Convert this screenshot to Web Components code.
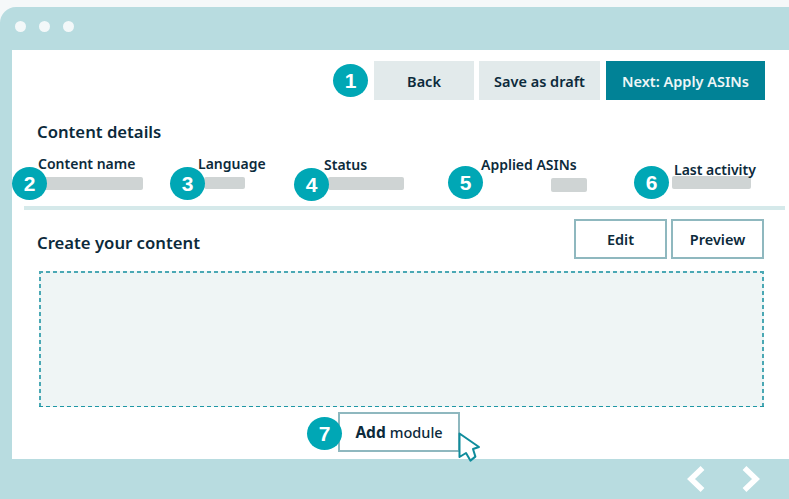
<!doctype html>
<html>
<head>
<meta charset="utf-8">
<title>Content details</title>
<style>
  html, body { margin: 0; height: 100%; }
  body {
    background: #f5f8f9;
    padding-top: 7px;
    box-sizing: border-box;
    overflow: hidden;
    font-family: "Noto Sans", sans-serif;
    font-weight: 600;
    color: #0c2a3b;
  }
</style>
</head>
<body>
<app-window>
  <tool-bar slot="top">
    <step-badge n="1" style="margin-right:6px"></step-badge>
    <ui-button kind="soft" style="width:100px">Back</ui-button>
    <ui-button kind="soft" style="width:121px;margin-left:5px">Save as draft</ui-button>
    <ui-button kind="primary" style="width:159px;margin-left:6px">Next: Apply ASINs</ui-button>
  </tool-bar>

  <section-title style="margin:21px 0 0 25px">Content details</section-title>

  <field-row>
    <info-field n="2" label="Content name" style="width:160px;--lx:0px;--ly:0px;--bx:6px;--by:5px;--bw:99px;--bh:13px;--nx:-26px;--ny:3px"></info-field>
    <info-field n="3" label="Language" style="width:126px;--lx:0px;--ly:0px;--bx:6px;--by:5px;--bw:41px;--bh:12px;--nx:-28px;--ny:3px"></info-field>
    <info-field n="4" label="Status" style="width:157px;--lx:0px;--ly:1px;--bx:4px;--by:5px;--bw:76px;--bh:13px;--nx:-30px;--ny:4px"></info-field>
    <info-field n="5" label="Applied ASINs" style="width:191px;--lx:0px;--ly:1px;--bx:70px;--by:6px;--bw:36px;--bh:14px;--nx:-33px;--ny:2px"></info-field>
    <info-field n="6" label="Last activity" style="width:110px;--lx:2px;--ly:6px;--bx:0px;--by:4px;--bw:79px;--bh:13px;--nx:-38px;--ny:2px"></info-field>
  </field-row>

  <hr-line></hr-line>

  <section-head>
    <section-title class="create">Create your content</section-title>
    <ui-button kind="outline" slot="actions" style="width:93px;height:40px">Edit</ui-button>
    <ui-button kind="outline" slot="actions" style="width:93px;height:40px;margin-left:4px">Preview</ui-button>
  </section-head>

  <drop-zone></drop-zone>

  <add-row>
    <ui-button kind="outline" style="width:122px;height:40px"><b>Add</b><small>module</small></ui-button>
  </add-row>
</app-window>

<script>
// one numbered teal circle, the callouts on the screenshot
class StepBadge extends HTMLElement {
  constructor() {
    super();
    this.attachShadow({ mode: "open" }).innerHTML = `
      <style>
        :host {
          display: flex; flex: none; align-items: center; justify-content: center;
          width: 35px; height: 33px; border-radius: 50%;
          background: #00a7b5; color: #fff;
          font: 700 21px "Liberation Sans", sans-serif;
        }
      </style>
      <span>${this.getAttribute("n")}</span>`;
  }
}
customElements.define("step-badge", StepBadge);

class UiButton extends HTMLElement {
  constructor() {
    super();
    this.attachShadow({ mode: "open" }).innerHTML = `
      <style>
        :host {
          display: flex; flex: none; align-items: center; justify-content: center;
          box-sizing: border-box; height: 39px;
          font-size: 14.500px; white-space: pre;
        }
        :host([kind=soft]) { background: #e2eaeb; }
        :host([kind=primary]) { background: #018296; color: #eef6f7; }
        :host([kind=outline]) { background: #fff; border: 2px solid #8fb8bf; }
        ::slotted(b) { font-size: 15.500px; font-weight: 700; margin-right: 4px; }
        ::slotted(small) { font-size: 14.500px; font-weight: 500; }
      </style>
      <slot></slot>`;
  }
}
customElements.define("ui-button", UiButton);

class ToolBar extends HTMLElement {
  constructor() {
    super();
    this.attachShadow({ mode: "open" }).innerHTML = `
      <style>
        :host { display: flex; align-items: center; justify-content: flex-end; padding: 11px 24px 0 0; }
      </style>
      <slot></slot>`;
  }
}
customElements.define("tool-bar", ToolBar);

class SectionTitle extends HTMLElement {
  constructor() {
    super();
    this.attachShadow({ mode: "open" }).innerHTML = `
      <style>
        :host { display: block; font-size: 16.700px; line-height: 22px; }
        :host(.create) { padding-top: 8px; }
      </style>
      <slot></slot>`;
  }
}
customElements.define("section-title", SectionTitle);

class FieldRow extends HTMLElement {
  constructor() {
    super();
    this.attachShadow({ mode: "open" }).innerHTML = `
      <style>
        :host { display: flex; padding: 12px 0 0 26px; height: 39px; }
      </style>
      <slot></slot>`;
  }
}
customElements.define("field-row", FieldRow);

// label over a grey placeholder bar, the badge sits on top of both
class InfoField extends HTMLElement {
  constructor() {
    super();
    this.attachShadow({ mode: "open" }).innerHTML = `
      <style>
        :host { display: block; position: relative; flex: none; }
        .label {
          position: relative; z-index: 1;
          font-size: 14px; line-height: 17px; white-space: nowrap;
          transform: translate(var(--lx), var(--ly));
        }
        .bar {
          margin: var(--by) 0 0 var(--bx);
          width: var(--bw); height: var(--bh);
          background: #cfd4d4; border-radius: 2px;
        }
        step-badge { position: absolute; z-index: 2; left: var(--nx); top: calc(17px + var(--ny) - 8px); }
      </style>
      <div class="label">${this.getAttribute("label")}</div>
      <div class="bar"></div>
      <step-badge n="${this.getAttribute("n")}"></step-badge>`;
  }
}
customElements.define("info-field", InfoField);

class HrLine extends HTMLElement {
  constructor() {
    super();
    this.attachShadow({ mode: "open" }).innerHTML = `
      <style>
        :host { display: block; height: 4px; margin: 12px 4px 0 12px; background: #d5e9ea; }
      </style>`;
  }
}
customElements.define("hr-line", HrLine);

class SectionHead extends HTMLElement {
  constructor() {
    super();
    this.attachShadow({ mode: "open" }).innerHTML = `
      <style>
        :host { display: flex; align-items: center; justify-content: space-between; padding: 9px 25px 0 25px; }
        .actions { display: flex; }
      </style>
      <slot></slot>
      <div class="actions"><slot name="actions"></slot></div>`;
  }
}
customElements.define("section-head", SectionHead);

// the dashes are drawn as gradients, a css dashed border comes out too short
class DropZone extends HTMLElement {
  constructor() {
    super();
    this.attachShadow({ mode: "open" }).innerHTML = `
      <style>
        :host {
          --dash: #4aa8b4;
          display: block; box-sizing: border-box; height: 136px;
          margin: 12px 25px 0 27px;
          background-color: #eff5f5;
          background-image:
            repeating-linear-gradient(90deg, var(--dash) 0 4px, transparent 4px 7px),
            repeating-linear-gradient(90deg, #1f97a5 0 4px, transparent 4px 7px),
            repeating-linear-gradient(0deg, var(--dash) 0 4px, transparent 4px 7px),
            repeating-linear-gradient(0deg, var(--dash) 0 4px, transparent 4px 7px);
          background-size: 100% 2px, 100% 1px, 2px 100%, 2px 100%;
          background-position: 0 0, 0 100%, 0 0, 100% 0;
          background-repeat: no-repeat;
        }
      </style>`;
  }
}
customElements.define("drop-zone", DropZone);

// add button with its badge and the pointer hanging off the corner
class AddRow extends HTMLElement {
  constructor() {
    super();
    this.attachShadow({ mode: "open" }).innerHTML = `
      <style>
        :host { display: block; position: relative; width: 122px; margin: 5px 0 0 326px; }
        step-badge { position: absolute; left: -31px; top: 5px; }
        svg { position: absolute; left: 120px; top: 20px; }
      </style>
      <slot></slot>
      <step-badge n="7"></step-badge>
      <svg width="24" height="32" viewBox="0 0 24 32" fill="#fff" stroke="#0f8c9c" stroke-width="2" stroke-linejoin="round">
        <path d="M1.500 1.500L21 15l-6 2 2.400 7.600-5 4L8 21l-6.500 4z"/>
      </svg>`;
  }
}
customElements.define("add-row", AddRow);

class AppWindow extends HTMLElement {
  constructor() {
    super();
    this.attachShadow({ mode: "open" }).innerHTML = `
      <style>
        :host {
          display: flex; flex-direction: column; height: 492px;
          background: #b8dce0; border-top-left-radius: 16px;
        }
        .title { display: flex; align-items: center; gap: 13px; height: 43px; flex: none; padding: 0 0 4px 15px; box-sizing: border-box; }
        .dot { width: 11px; height: 11px; border-radius: 50%; background: #f3f8f9; }
        .page { flex: none; height: 409px; margin-left: 12px; background: #fff; }
        .nav { flex: 1; display: flex; align-items: center; justify-content: flex-end; gap: 35px; padding: 0 28px 0 0; }
        .nav svg { display: block; }
      </style>
      <div class="title"><span class="dot"></span><span class="dot"></span><span class="dot"></span></div>
      <div class="page"><slot name="top"></slot><slot></slot></div>
      <div class="nav">
        <svg width="20" height="28" viewBox="0 0 20 28" fill="none" stroke="#fff" stroke-width="5.500"><path d="M16.500 3L5 14l11.500 11"/></svg>
        <svg width="20" height="28" viewBox="0 0 20 28" fill="none" stroke="#fff" stroke-width="5.500"><path d="M3.500 3L15 14 3.500 25"/></svg>
      </div>`;
  }
}
customElements.define("app-window", AppWindow);
</script>
</body>
</html>
